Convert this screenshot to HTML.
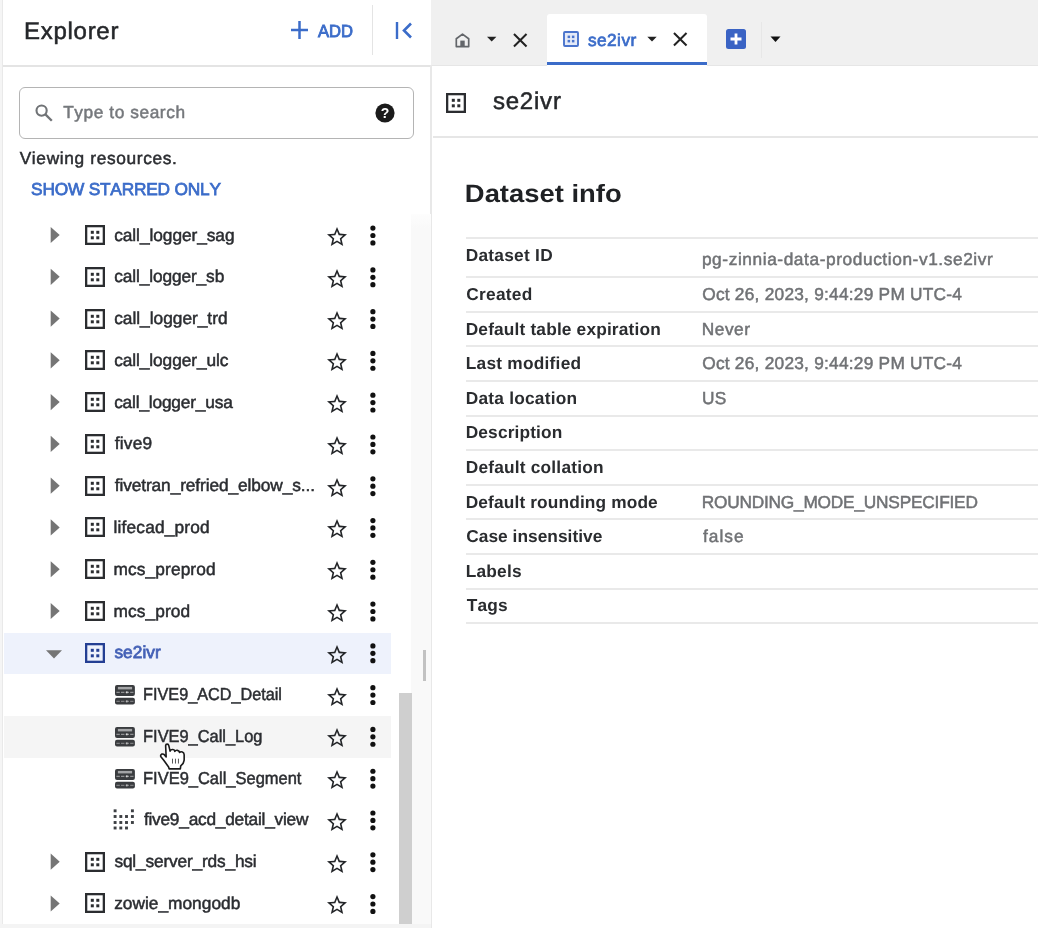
<!DOCTYPE html>
<html><head><meta charset="utf-8"><title>Explorer</title>
<style>
html,body{margin:0;padding:0;}
body{width:1038px;height:928px;position:relative;overflow:hidden;background:#fff;font-family:"Liberation Sans",sans-serif;}
#root{position:absolute;left:-6px;top:-6px;width:1050px;height:940px;overflow:hidden;background:#fff;filter:blur(0.65px);}
#in{position:absolute;left:6px;top:6px;width:1038px;height:928px;}
.t{position:absolute;white-space:nowrap;line-height:1.149;text-rendering:geometricPrecision;font-kerning:none;-webkit-text-stroke:0.5px currentColor;}
.a{position:absolute;}
svg{position:absolute;overflow:visible;}
</style></head><body><div id="root"><div id="in">

<div class="a" style="left:430.5px;top:-6px;width:614px;height:71.3px;background:#f0f0f0"></div>
<div class="a" style="left:430.5px;top:65px;width:614px;height:1.2px;background:#e6e6e6"></div>
<div class="a" style="left:-6px;top:65.1px;width:437px;height:1.5px;background:#e4e4e4"></div>
<div class="a" style="left:-6px;top:-6px;width:8.4px;height:940px;background:#f5f5f5"></div>
<div class="a" style="left:2.2px;top:-6px;width:1.2px;height:940px;background:#e9e9e9"></div>
<div class="a" style="left:430px;top:65px;width:1.8px;height:869px;background:#e8e8e8"></div>
<div class="a" style="left:371.5px;top:5px;width:1.5px;height:50px;background:#e4e4e4"></div>
<span class="t" style="left:24.12px;top:17.68px;font-size:24px;color:#25272a;font-weight:400;letter-spacing:0.704px;">Explorer</span>
<svg style="left:291.2px;top:21.2px" width="17" height="18" viewBox="0 0 17 18"><path d="M8.5 0v18M0 9h17" stroke="#3b6cc9" stroke-width="2.5" fill="none"/></svg>
<span class="t" style="left:318.3px;top:20.67px;font-size:17.6px;color:#3b6cc9;font-weight:400;letter-spacing:0px;-webkit-text-stroke:0.9px currentColor;transform:scaleX(0.9439);transform-origin:-0.0px 0;">ADD</span>
<svg style="left:395.3px;top:21.3px" width="19" height="19" viewBox="0 0 19 19"><path d="M2 1v17" stroke="#3b6cc9" stroke-width="2.4" fill="none"/><path d="M16 2.5L9 9.5l7 7" stroke="#3b6cc9" stroke-width="2.6" fill="none"/></svg>
<div class="a" style="left:19px;top:87px;width:392.5px;height:49.5px;border:1.5px solid #b4b4b4;border-radius:6px;background:#fff"></div>
<svg style="left:35.3px;top:104.2px" width="18" height="18" viewBox="0 0 18 18"><circle cx="6.6" cy="6.6" r="5.1" stroke="#707376" stroke-width="2.1" fill="none"/><path d="M10.4 10.4L16.8 16.8" stroke="#707376" stroke-width="2.3" fill="none"/></svg>
<span class="t" style="left:63.13px;top:103.04px;font-size:17.3px;color:#75787c;font-weight:400;letter-spacing:0.582px;">Type to search</span>
<svg style="left:374.7px;top:102.6px" width="20" height="20" viewBox="0 0 20 20"><circle cx="10" cy="10" r="9.6" fill="#1b1b1b"/><text x="10" y="15" font-family="Liberation Sans" font-weight="700" font-size="14" fill="#fff" text-anchor="middle">?</text></svg>
<span class="t" style="left:19.7px;top:148.54px;font-size:17.3px;color:#2b2d31;font-weight:400;letter-spacing:0.66px;">Viewing resources.</span>
<span class="t" style="left:31.06px;top:179.94px;font-size:17.3px;color:#3b6cc9;font-weight:400;letter-spacing:-0.194px;-webkit-text-stroke:0.75px currentColor;">SHOW STARRED ONLY</span>
<div class="a" style="left:4px;top:632.9px;width:387px;height:41.4px;background:#eef2fc"></div>
<div class="a" style="left:4px;top:716.16px;width:387px;height:41.5px;background:#f5f5f5"></div>
<svg style="left:0;top:0" width="1" height="1"><polygon points="50.7,226.9 59.7,235.0 50.7,243.1" fill="#757575"/></svg>
<svg style="left:85.3px;top:225.0px" width="20" height="20" viewBox="0 0 20 20"><rect x="1.15" y="1.15" width="17.7" height="17.7" fill="none" stroke="#2b2d30" stroke-width="2.3"/><rect x="5.8" y="5.8" width="3" height="3" fill="#2b2d30"/><rect x="11.3" y="5.8" width="3" height="3" fill="#2b2d30"/><rect x="5.8" y="11.3" width="3" height="3" fill="#2b2d30"/><rect x="11.3" y="11.3" width="3" height="3" fill="#2b2d30"/></svg>
<span class="t" style="left:114.16px;top:225.54px;font-size:17.3px;color:#2b2d31;font-weight:400;letter-spacing:-0.048px;">call_logger_sag</span>
<svg style="left:325.1px;top:225.0px" width="24.0" height="24.0" viewBox="0 0 24 24"><path fill="#232528" d="M22 9.24l-7.19-.62L12 2 9.19 8.63 2 9.24l5.46 4.73L5.82 21 12 17.27 18.18 21l-1.63-7.03L22 9.24zM12 15.4l-3.76 2.27 1-4.28-3.32-2.88 4.38-.38L12 6.1l1.71 4.04 4.38.38-3.32 2.88 1 4.28L12 15.4z"/></svg>
<svg style="left:0;top:0" width="1" height="1"><circle cx="372.9" cy="228.1" r="2.6" fill="#111"/><circle cx="372.9" cy="235.5" r="2.6" fill="#111"/><circle cx="372.9" cy="242.9" r="2.6" fill="#111"/></svg>
<svg style="left:0;top:0" width="1" height="1"><polygon points="50.7,268.68 59.7,276.78 50.7,284.88" fill="#757575"/></svg>
<svg style="left:85.3px;top:266.78000000000003px" width="20" height="20" viewBox="0 0 20 20"><rect x="1.15" y="1.15" width="17.7" height="17.7" fill="none" stroke="#2b2d30" stroke-width="2.3"/><rect x="5.8" y="5.8" width="3" height="3" fill="#2b2d30"/><rect x="11.3" y="5.8" width="3" height="3" fill="#2b2d30"/><rect x="5.8" y="11.3" width="3" height="3" fill="#2b2d30"/><rect x="11.3" y="11.3" width="3" height="3" fill="#2b2d30"/></svg>
<span class="t" style="left:114.16px;top:267.32px;font-size:17.3px;color:#2b2d31;font-weight:400;letter-spacing:-0.102px;">call_logger_sb</span>
<svg style="left:325.1px;top:266.78px" width="24.0" height="24.0" viewBox="0 0 24 24"><path fill="#232528" d="M22 9.24l-7.19-.62L12 2 9.19 8.63 2 9.24l5.46 4.73L5.82 21 12 17.27 18.18 21l-1.63-7.03L22 9.24zM12 15.4l-3.76 2.27 1-4.28-3.32-2.88 4.38-.38L12 6.1l1.71 4.04 4.38.38-3.32 2.88 1 4.28L12 15.4z"/></svg>
<svg style="left:0;top:0" width="1" height="1"><circle cx="372.9" cy="269.88" r="2.6" fill="#111"/><circle cx="372.9" cy="277.28" r="2.6" fill="#111"/><circle cx="372.9" cy="284.68" r="2.6" fill="#111"/></svg>
<svg style="left:0;top:0" width="1" height="1"><polygon points="50.7,310.46 59.7,318.56 50.7,326.66" fill="#757575"/></svg>
<svg style="left:85.3px;top:308.56000000000006px" width="20" height="20" viewBox="0 0 20 20"><rect x="1.15" y="1.15" width="17.7" height="17.7" fill="none" stroke="#2b2d30" stroke-width="2.3"/><rect x="5.8" y="5.8" width="3" height="3" fill="#2b2d30"/><rect x="11.3" y="5.8" width="3" height="3" fill="#2b2d30"/><rect x="5.8" y="11.3" width="3" height="3" fill="#2b2d30"/><rect x="11.3" y="11.3" width="3" height="3" fill="#2b2d30"/></svg>
<span class="t" style="left:114.16px;top:309.1px;font-size:17.3px;color:#2b2d31;font-weight:400;letter-spacing:0.002px;">call_logger_trd</span>
<svg style="left:325.1px;top:308.56px" width="24.0" height="24.0" viewBox="0 0 24 24"><path fill="#232528" d="M22 9.24l-7.19-.62L12 2 9.19 8.63 2 9.24l5.46 4.73L5.82 21 12 17.27 18.18 21l-1.63-7.03L22 9.24zM12 15.4l-3.76 2.27 1-4.28-3.32-2.88 4.38-.38L12 6.1l1.71 4.04 4.38.38-3.32 2.88 1 4.28L12 15.4z"/></svg>
<svg style="left:0;top:0" width="1" height="1"><circle cx="372.9" cy="311.66" r="2.6" fill="#111"/><circle cx="372.9" cy="319.06" r="2.6" fill="#111"/><circle cx="372.9" cy="326.46" r="2.6" fill="#111"/></svg>
<svg style="left:0;top:0" width="1" height="1"><polygon points="50.7,352.24 59.7,360.34 50.7,368.44" fill="#757575"/></svg>
<svg style="left:85.3px;top:350.34000000000003px" width="20" height="20" viewBox="0 0 20 20"><rect x="1.15" y="1.15" width="17.7" height="17.7" fill="none" stroke="#2b2d30" stroke-width="2.3"/><rect x="5.8" y="5.8" width="3" height="3" fill="#2b2d30"/><rect x="11.3" y="5.8" width="3" height="3" fill="#2b2d30"/><rect x="5.8" y="11.3" width="3" height="3" fill="#2b2d30"/><rect x="11.3" y="11.3" width="3" height="3" fill="#2b2d30"/></svg>
<span class="t" style="left:114.16px;top:350.88px;font-size:17.3px;color:#2b2d31;font-weight:400;letter-spacing:-0.078px;">call_logger_ulc</span>
<svg style="left:325.1px;top:350.34px" width="24.0" height="24.0" viewBox="0 0 24 24"><path fill="#232528" d="M22 9.24l-7.19-.62L12 2 9.19 8.63 2 9.24l5.46 4.73L5.82 21 12 17.27 18.18 21l-1.63-7.03L22 9.24zM12 15.4l-3.76 2.27 1-4.28-3.32-2.88 4.38-.38L12 6.1l1.71 4.04 4.38.38-3.32 2.88 1 4.28L12 15.4z"/></svg>
<svg style="left:0;top:0" width="1" height="1"><circle cx="372.9" cy="353.44" r="2.6" fill="#111"/><circle cx="372.9" cy="360.84" r="2.6" fill="#111"/><circle cx="372.9" cy="368.24" r="2.6" fill="#111"/></svg>
<svg style="left:0;top:0" width="1" height="1"><polygon points="50.7,394.02 59.7,402.12 50.7,410.22" fill="#757575"/></svg>
<svg style="left:85.3px;top:392.12px" width="20" height="20" viewBox="0 0 20 20"><rect x="1.15" y="1.15" width="17.7" height="17.7" fill="none" stroke="#2b2d30" stroke-width="2.3"/><rect x="5.8" y="5.8" width="3" height="3" fill="#2b2d30"/><rect x="11.3" y="5.8" width="3" height="3" fill="#2b2d30"/><rect x="5.8" y="11.3" width="3" height="3" fill="#2b2d30"/><rect x="11.3" y="11.3" width="3" height="3" fill="#2b2d30"/></svg>
<span class="t" style="left:114.16px;top:392.66px;font-size:17.3px;color:#2b2d31;font-weight:400;letter-spacing:-0.175px;">call_logger_usa</span>
<svg style="left:325.1px;top:392.12px" width="24.0" height="24.0" viewBox="0 0 24 24"><path fill="#232528" d="M22 9.24l-7.19-.62L12 2 9.19 8.63 2 9.24l5.46 4.73L5.82 21 12 17.27 18.18 21l-1.63-7.03L22 9.24zM12 15.4l-3.76 2.27 1-4.28-3.32-2.88 4.38-.38L12 6.1l1.71 4.04 4.38.38-3.32 2.88 1 4.28L12 15.4z"/></svg>
<svg style="left:0;top:0" width="1" height="1"><circle cx="372.9" cy="395.22" r="2.6" fill="#111"/><circle cx="372.9" cy="402.62" r="2.6" fill="#111"/><circle cx="372.9" cy="410.02" r="2.6" fill="#111"/></svg>
<svg style="left:0;top:0" width="1" height="1"><polygon points="50.7,435.8 59.7,443.9 50.7,452.0" fill="#757575"/></svg>
<svg style="left:85.3px;top:433.90000000000003px" width="20" height="20" viewBox="0 0 20 20"><rect x="1.15" y="1.15" width="17.7" height="17.7" fill="none" stroke="#2b2d30" stroke-width="2.3"/><rect x="5.8" y="5.8" width="3" height="3" fill="#2b2d30"/><rect x="11.3" y="5.8" width="3" height="3" fill="#2b2d30"/><rect x="5.8" y="11.3" width="3" height="3" fill="#2b2d30"/><rect x="11.3" y="11.3" width="3" height="3" fill="#2b2d30"/></svg>
<span class="t" style="left:114.7px;top:434.44px;font-size:17.3px;color:#2b2d31;font-weight:400;letter-spacing:0.24px;">five9</span>
<svg style="left:325.1px;top:433.9px" width="24.0" height="24.0" viewBox="0 0 24 24"><path fill="#232528" d="M22 9.24l-7.19-.62L12 2 9.19 8.63 2 9.24l5.46 4.73L5.82 21 12 17.27 18.18 21l-1.63-7.03L22 9.24zM12 15.4l-3.76 2.27 1-4.28-3.32-2.88 4.38-.38L12 6.1l1.71 4.04 4.38.38-3.32 2.88 1 4.28L12 15.4z"/></svg>
<svg style="left:0;top:0" width="1" height="1"><circle cx="372.9" cy="437.0" r="2.6" fill="#111"/><circle cx="372.9" cy="444.4" r="2.6" fill="#111"/><circle cx="372.9" cy="451.8" r="2.6" fill="#111"/></svg>
<svg style="left:0;top:0" width="1" height="1"><polygon points="50.7,477.58 59.7,485.68 50.7,493.78" fill="#757575"/></svg>
<svg style="left:85.3px;top:475.68000000000006px" width="20" height="20" viewBox="0 0 20 20"><rect x="1.15" y="1.15" width="17.7" height="17.7" fill="none" stroke="#2b2d30" stroke-width="2.3"/><rect x="5.8" y="5.8" width="3" height="3" fill="#2b2d30"/><rect x="11.3" y="5.8" width="3" height="3" fill="#2b2d30"/><rect x="5.8" y="11.3" width="3" height="3" fill="#2b2d30"/><rect x="11.3" y="11.3" width="3" height="3" fill="#2b2d30"/></svg>
<span class="t" style="left:114.7px;top:476.22px;font-size:17.3px;color:#2b2d31;font-weight:400;letter-spacing:-0.09px;">fivetran_refried_elbow_s...</span>
<svg style="left:325.1px;top:475.68px" width="24.0" height="24.0" viewBox="0 0 24 24"><path fill="#232528" d="M22 9.24l-7.19-.62L12 2 9.19 8.63 2 9.24l5.46 4.73L5.82 21 12 17.27 18.18 21l-1.63-7.03L22 9.24zM12 15.4l-3.76 2.27 1-4.28-3.32-2.88 4.38-.38L12 6.1l1.71 4.04 4.38.38-3.32 2.88 1 4.28L12 15.4z"/></svg>
<svg style="left:0;top:0" width="1" height="1"><circle cx="372.9" cy="478.78" r="2.6" fill="#111"/><circle cx="372.9" cy="486.18" r="2.6" fill="#111"/><circle cx="372.9" cy="493.58" r="2.6" fill="#111"/></svg>
<svg style="left:0;top:0" width="1" height="1"><polygon points="50.7,519.36 59.7,527.46 50.7,535.56" fill="#757575"/></svg>
<svg style="left:85.3px;top:517.46px" width="20" height="20" viewBox="0 0 20 20"><rect x="1.15" y="1.15" width="17.7" height="17.7" fill="none" stroke="#2b2d30" stroke-width="2.3"/><rect x="5.8" y="5.8" width="3" height="3" fill="#2b2d30"/><rect x="11.3" y="5.8" width="3" height="3" fill="#2b2d30"/><rect x="5.8" y="11.3" width="3" height="3" fill="#2b2d30"/><rect x="11.3" y="11.3" width="3" height="3" fill="#2b2d30"/></svg>
<span class="t" style="left:113.62px;top:518.0px;font-size:17.3px;color:#2b2d31;font-weight:400;letter-spacing:0.163px;">lifecad_prod</span>
<svg style="left:325.1px;top:517.46px" width="24.0" height="24.0" viewBox="0 0 24 24"><path fill="#232528" d="M22 9.24l-7.19-.62L12 2 9.19 8.63 2 9.24l5.46 4.73L5.82 21 12 17.27 18.18 21l-1.63-7.03L22 9.24zM12 15.4l-3.76 2.27 1-4.28-3.32-2.88 4.38-.38L12 6.1l1.71 4.04 4.38.38-3.32 2.88 1 4.28L12 15.4z"/></svg>
<svg style="left:0;top:0" width="1" height="1"><circle cx="372.9" cy="520.56" r="2.6" fill="#111"/><circle cx="372.9" cy="527.96" r="2.6" fill="#111"/><circle cx="372.9" cy="535.36" r="2.6" fill="#111"/></svg>
<svg style="left:0;top:0" width="1" height="1"><polygon points="50.7,561.14 59.7,569.24 50.7,577.34" fill="#757575"/></svg>
<svg style="left:85.3px;top:559.24px" width="20" height="20" viewBox="0 0 20 20"><rect x="1.15" y="1.15" width="17.7" height="17.7" fill="none" stroke="#2b2d30" stroke-width="2.3"/><rect x="5.8" y="5.8" width="3" height="3" fill="#2b2d30"/><rect x="11.3" y="5.8" width="3" height="3" fill="#2b2d30"/><rect x="5.8" y="11.3" width="3" height="3" fill="#2b2d30"/><rect x="11.3" y="11.3" width="3" height="3" fill="#2b2d30"/></svg>
<span class="t" style="left:113.62px;top:559.78px;font-size:17.3px;color:#2b2d31;font-weight:400;letter-spacing:0.109px;">mcs_preprod</span>
<svg style="left:325.1px;top:559.24px" width="24.0" height="24.0" viewBox="0 0 24 24"><path fill="#232528" d="M22 9.24l-7.19-.62L12 2 9.19 8.63 2 9.24l5.46 4.73L5.82 21 12 17.27 18.18 21l-1.63-7.03L22 9.24zM12 15.4l-3.76 2.27 1-4.28-3.32-2.88 4.38-.38L12 6.1l1.71 4.04 4.38.38-3.32 2.88 1 4.28L12 15.4z"/></svg>
<svg style="left:0;top:0" width="1" height="1"><circle cx="372.9" cy="562.34" r="2.6" fill="#111"/><circle cx="372.9" cy="569.74" r="2.6" fill="#111"/><circle cx="372.9" cy="577.14" r="2.6" fill="#111"/></svg>
<svg style="left:0;top:0" width="1" height="1"><polygon points="50.7,602.92 59.7,611.02 50.7,619.12" fill="#757575"/></svg>
<svg style="left:85.3px;top:601.02px" width="20" height="20" viewBox="0 0 20 20"><rect x="1.15" y="1.15" width="17.7" height="17.7" fill="none" stroke="#2b2d30" stroke-width="2.3"/><rect x="5.8" y="5.8" width="3" height="3" fill="#2b2d30"/><rect x="11.3" y="5.8" width="3" height="3" fill="#2b2d30"/><rect x="5.8" y="11.3" width="3" height="3" fill="#2b2d30"/><rect x="11.3" y="11.3" width="3" height="3" fill="#2b2d30"/></svg>
<span class="t" style="left:113.62px;top:601.56px;font-size:17.3px;color:#2b2d31;font-weight:400;letter-spacing:0.085px;">mcs_prod</span>
<svg style="left:325.1px;top:601.02px" width="24.0" height="24.0" viewBox="0 0 24 24"><path fill="#232528" d="M22 9.24l-7.19-.62L12 2 9.19 8.63 2 9.24l5.46 4.73L5.82 21 12 17.27 18.18 21l-1.63-7.03L22 9.24zM12 15.4l-3.76 2.27 1-4.28-3.32-2.88 4.38-.38L12 6.1l1.71 4.04 4.38.38-3.32 2.88 1 4.28L12 15.4z"/></svg>
<svg style="left:0;top:0" width="1" height="1"><circle cx="372.9" cy="604.12" r="2.6" fill="#111"/><circle cx="372.9" cy="611.52" r="2.6" fill="#111"/><circle cx="372.9" cy="618.92" r="2.6" fill="#111"/></svg>
<svg style="left:0;top:0" width="1" height="1"><polygon points="46,650.3 62,650.3 54,658.6" fill="#757575"/></svg>
<svg style="left:85.3px;top:642.8000000000001px" width="20" height="20" viewBox="0 0 20 20"><rect x="1.15" y="1.15" width="17.7" height="17.7" fill="none" stroke="#243f93" stroke-width="2.3"/><rect x="5.8" y="5.8" width="3" height="3" fill="#243f93"/><rect x="11.3" y="5.8" width="3" height="3" fill="#243f93"/><rect x="5.8" y="11.3" width="3" height="3" fill="#243f93"/><rect x="11.3" y="11.3" width="3" height="3" fill="#243f93"/></svg>
<span class="t" style="left:114.43px;top:643.34px;font-size:17.3px;color:#4461b6;font-weight:400;letter-spacing:0.041px;-webkit-text-stroke:0.75px currentColor;">se2ivr</span>
<svg style="left:325.1px;top:642.8px" width="24.0" height="24.0" viewBox="0 0 24 24"><path fill="#232528" d="M22 9.24l-7.19-.62L12 2 9.19 8.63 2 9.24l5.46 4.73L5.82 21 12 17.27 18.18 21l-1.63-7.03L22 9.24zM12 15.4l-3.76 2.27 1-4.28-3.32-2.88 4.38-.38L12 6.1l1.71 4.04 4.38.38-3.32 2.88 1 4.28L12 15.4z"/></svg>
<svg style="left:0;top:0" width="1" height="1"><circle cx="372.9" cy="645.9" r="2.6" fill="#111"/><circle cx="372.9" cy="653.3" r="2.6" fill="#111"/><circle cx="372.9" cy="660.7" r="2.6" fill="#111"/></svg>
<svg style="left:114.65px;top:685.03px" width="19.9" height="19.3" viewBox="0 0 19.9 19.3"><rect x="0" y="0" width="19.9" height="10.9" rx="2" fill="#3a3c3f"/><rect x="2.9" y="1.9" width="14.2" height="2.5" fill="#a4a5a7"/><path d="M1.4 7.3h17.1" stroke="#909193" stroke-width="1.3" stroke-dasharray="3.4 1.2"/><rect x="11.2" y="6.4" width="1.3" height="1.9" fill="#e8e8e8"/><rect x="0" y="12.8" width="19.9" height="6.6" rx="2" fill="#3a3c3f"/><path d="M1.4 16.4h17.1" stroke="#7d7e80" stroke-width="1.3" stroke-dasharray="3.4 1.2"/><rect x="11.2" y="15.4" width="1.3" height="2" fill="#c8c8c8"/></svg>
<span class="t" style="left:142.95px;top:685.12px;font-size:17.3px;color:#2b2d31;font-weight:400;letter-spacing:0px;transform:scaleX(0.9390);transform-origin:1.35px 0;">FIVE9_ACD_Detail</span>
<svg style="left:325.1px;top:684.58px" width="24.0" height="24.0" viewBox="0 0 24 24"><path fill="#232528" d="M22 9.24l-7.19-.62L12 2 9.19 8.63 2 9.24l5.46 4.73L5.82 21 12 17.27 18.18 21l-1.63-7.03L22 9.24zM12 15.4l-3.76 2.27 1-4.28-3.32-2.88 4.38-.38L12 6.1l1.71 4.04 4.38.38-3.32 2.88 1 4.28L12 15.4z"/></svg>
<svg style="left:0;top:0" width="1" height="1"><circle cx="372.9" cy="687.68" r="2.6" fill="#111"/><circle cx="372.9" cy="695.08" r="2.6" fill="#111"/><circle cx="372.9" cy="702.48" r="2.6" fill="#111"/></svg>
<svg style="left:114.65px;top:726.81px" width="19.9" height="19.3" viewBox="0 0 19.9 19.3"><rect x="0" y="0" width="19.9" height="10.9" rx="2" fill="#3a3c3f"/><rect x="2.9" y="1.9" width="14.2" height="2.5" fill="#a4a5a7"/><path d="M1.4 7.3h17.1" stroke="#909193" stroke-width="1.3" stroke-dasharray="3.4 1.2"/><rect x="11.2" y="6.4" width="1.3" height="1.9" fill="#e8e8e8"/><rect x="0" y="12.8" width="19.9" height="6.6" rx="2" fill="#3a3c3f"/><path d="M1.4 16.4h17.1" stroke="#7d7e80" stroke-width="1.3" stroke-dasharray="3.4 1.2"/><rect x="11.2" y="15.4" width="1.3" height="2" fill="#c8c8c8"/></svg>
<span class="t" style="left:142.95px;top:726.9px;font-size:17.3px;color:#2b2d31;font-weight:400;letter-spacing:0px;transform:scaleX(0.9478);transform-origin:1.35px 0;">FIVE9_Call_Log</span>
<svg style="left:325.1px;top:726.36px" width="24.0" height="24.0" viewBox="0 0 24 24"><path fill="#232528" d="M22 9.24l-7.19-.62L12 2 9.19 8.63 2 9.24l5.46 4.73L5.82 21 12 17.27 18.18 21l-1.63-7.03L22 9.24zM12 15.4l-3.76 2.27 1-4.28-3.32-2.88 4.38-.38L12 6.1l1.71 4.04 4.38.38-3.32 2.88 1 4.28L12 15.4z"/></svg>
<svg style="left:0;top:0" width="1" height="1"><circle cx="372.9" cy="729.46" r="2.6" fill="#111"/><circle cx="372.9" cy="736.86" r="2.6" fill="#111"/><circle cx="372.9" cy="744.26" r="2.6" fill="#111"/></svg>
<svg style="left:114.65px;top:768.59px" width="19.9" height="19.3" viewBox="0 0 19.9 19.3"><rect x="0" y="0" width="19.9" height="10.9" rx="2" fill="#3a3c3f"/><rect x="2.9" y="1.9" width="14.2" height="2.5" fill="#a4a5a7"/><path d="M1.4 7.3h17.1" stroke="#909193" stroke-width="1.3" stroke-dasharray="3.4 1.2"/><rect x="11.2" y="6.4" width="1.3" height="1.9" fill="#e8e8e8"/><rect x="0" y="12.8" width="19.9" height="6.6" rx="2" fill="#3a3c3f"/><path d="M1.4 16.4h17.1" stroke="#7d7e80" stroke-width="1.3" stroke-dasharray="3.4 1.2"/><rect x="11.2" y="15.4" width="1.3" height="2" fill="#c8c8c8"/></svg>
<span class="t" style="left:142.95px;top:768.68px;font-size:17.3px;color:#2b2d31;font-weight:400;letter-spacing:0px;transform:scaleX(0.9529);transform-origin:1.35px 0;">FIVE9_Call_Segment</span>
<svg style="left:325.1px;top:768.14px" width="24.0" height="24.0" viewBox="0 0 24 24"><path fill="#232528" d="M22 9.24l-7.19-.62L12 2 9.19 8.63 2 9.24l5.46 4.73L5.82 21 12 17.27 18.18 21l-1.63-7.03L22 9.24zM12 15.4l-3.76 2.27 1-4.28-3.32-2.88 4.38-.38L12 6.1l1.71 4.04 4.38.38-3.32 2.88 1 4.28L12 15.4z"/></svg>
<svg style="left:0;top:0" width="1" height="1"><circle cx="372.9" cy="771.24" r="2.6" fill="#111"/><circle cx="372.9" cy="778.64" r="2.6" fill="#111"/><circle cx="372.9" cy="786.04" r="2.6" fill="#111"/></svg>
<svg style="left:113.4px;top:809.22px" width="21" height="21" viewBox="0 0 21 21"><rect x="0.65" y="0.35" width="2.9" height="2.9" fill="#3c3f43"/><rect x="17.95" y="0.35" width="2.9" height="2.9" fill="#3c3f43"/><rect x="0.65" y="6.05" width="2.9" height="2.9" fill="#3c3f43"/><rect x="6.35" y="6.05" width="2.9" height="2.9" fill="#3c3f43"/><rect x="12.05" y="6.05" width="2.9" height="2.9" fill="#3c3f43"/><rect x="17.95" y="6.05" width="2.9" height="2.9" fill="#3c3f43"/><rect x="0.65" y="12.05" width="2.9" height="2.9" fill="#3c3f43"/><rect x="6.35" y="12.05" width="2.9" height="2.9" fill="#3c3f43"/><rect x="12.05" y="12.05" width="2.9" height="2.9" fill="#3c3f43"/><rect x="17.95" y="12.05" width="2.9" height="2.9" fill="#3c3f43"/><rect x="0.65" y="17.55" width="2.9" height="2.9" fill="#3c3f43"/><rect x="6.35" y="17.55" width="2.9" height="2.9" fill="#3c3f43"/><rect x="12.05" y="17.55" width="2.9" height="2.9" fill="#3c3f43"/></svg>
<span class="t" style="left:143.9px;top:810.46px;font-size:17.3px;color:#2b2d31;font-weight:400;letter-spacing:-0.229px;">five9_acd_detail_view</span>
<svg style="left:325.1px;top:809.92px" width="24.0" height="24.0" viewBox="0 0 24 24"><path fill="#232528" d="M22 9.24l-7.19-.62L12 2 9.19 8.63 2 9.24l5.46 4.73L5.82 21 12 17.27 18.18 21l-1.63-7.03L22 9.24zM12 15.4l-3.76 2.27 1-4.28-3.32-2.88 4.38-.38L12 6.1l1.71 4.04 4.38.38-3.32 2.88 1 4.28L12 15.4z"/></svg>
<svg style="left:0;top:0" width="1" height="1"><circle cx="372.9" cy="813.02" r="2.6" fill="#111"/><circle cx="372.9" cy="820.42" r="2.6" fill="#111"/><circle cx="372.9" cy="827.82" r="2.6" fill="#111"/></svg>
<svg style="left:0;top:0" width="1" height="1"><polygon points="50.7,853.6 59.7,861.7 50.7,869.8" fill="#757575"/></svg>
<svg style="left:85.3px;top:851.7px" width="20" height="20" viewBox="0 0 20 20"><rect x="1.15" y="1.15" width="17.7" height="17.7" fill="none" stroke="#2b2d30" stroke-width="2.3"/><rect x="5.8" y="5.8" width="3" height="3" fill="#2b2d30"/><rect x="11.3" y="5.8" width="3" height="3" fill="#2b2d30"/><rect x="5.8" y="11.3" width="3" height="3" fill="#2b2d30"/><rect x="11.3" y="11.3" width="3" height="3" fill="#2b2d30"/></svg>
<span class="t" style="left:114.43px;top:852.24px;font-size:17.3px;color:#2b2d31;font-weight:400;letter-spacing:-0.164px;">sql_server_rds_hsi</span>
<svg style="left:325.1px;top:851.7px" width="24.0" height="24.0" viewBox="0 0 24 24"><path fill="#232528" d="M22 9.24l-7.19-.62L12 2 9.19 8.63 2 9.24l5.46 4.73L5.82 21 12 17.27 18.18 21l-1.63-7.03L22 9.24zM12 15.4l-3.76 2.27 1-4.28-3.32-2.88 4.38-.38L12 6.1l1.71 4.04 4.38.38-3.32 2.88 1 4.28L12 15.4z"/></svg>
<svg style="left:0;top:0" width="1" height="1"><circle cx="372.9" cy="854.8" r="2.6" fill="#111"/><circle cx="372.9" cy="862.2" r="2.6" fill="#111"/><circle cx="372.9" cy="869.6" r="2.6" fill="#111"/></svg>
<svg style="left:0;top:0" width="1" height="1"><polygon points="50.7,895.38 59.7,903.48 50.7,911.58" fill="#757575"/></svg>
<svg style="left:85.3px;top:893.48px" width="20" height="20" viewBox="0 0 20 20"><rect x="1.15" y="1.15" width="17.7" height="17.7" fill="none" stroke="#2b2d30" stroke-width="2.3"/><rect x="5.8" y="5.8" width="3" height="3" fill="#2b2d30"/><rect x="11.3" y="5.8" width="3" height="3" fill="#2b2d30"/><rect x="5.8" y="11.3" width="3" height="3" fill="#2b2d30"/><rect x="11.3" y="11.3" width="3" height="3" fill="#2b2d30"/></svg>
<span class="t" style="left:114.16px;top:894.02px;font-size:17.3px;color:#2b2d31;font-weight:400;letter-spacing:0.021px;">zowie_mongodb</span>
<svg style="left:325.1px;top:893.48px" width="24.0" height="24.0" viewBox="0 0 24 24"><path fill="#232528" d="M22 9.24l-7.19-.62L12 2 9.19 8.63 2 9.24l5.46 4.73L5.82 21 12 17.27 18.18 21l-1.63-7.03L22 9.24zM12 15.4l-3.76 2.27 1-4.28-3.32-2.88 4.38-.38L12 6.1l1.71 4.04 4.38.38-3.32 2.88 1 4.28L12 15.4z"/></svg>
<svg style="left:0;top:0" width="1" height="1"><circle cx="372.9" cy="896.58" r="2.6" fill="#111"/><circle cx="372.9" cy="903.98" r="2.6" fill="#111"/><circle cx="372.9" cy="911.38" r="2.6" fill="#111"/></svg>
<div class="a" style="left:410.5px;top:214px;width:20px;height:710px;background:linear-gradient(#fdfdfd,#f9f9f9 14px)"></div>
<div class="a" style="left:399px;top:693px;width:13px;height:230.5px;background:#cfcfcf"></div>
<div class="a" style="left:422.5px;top:650px;width:3px;height:31px;background:#c2c2c2"></div>
<div class="a" style="left:-6px;top:924.3px;width:437px;height:10px;background:#f4f4f4"></div>
<svg style="left:140px;top:725px" width="70" height="60" viewBox="0 0 1038 890"><path d="M380 305 Q382 283 402 283 Q424 283 427 305 L446 388 Q452 362 488 364 Q514 366 516 392 Q524 372 556 376 Q584 380 586 408 Q600 392 628 400 Q654 410 655 440 L655 520 Q650 570 604 606 L598 650 L432 650 L424 622 L352 522 L310 470 Q298 448 322 432 Q344 424 360 440 L388 474 Z" fill="#fff" stroke="#1a1a1a" stroke-width="24" stroke-linejoin="round"/><path d="M482 500V572M526 500V572M570 500V572" stroke="#1a1a1a" stroke-width="11"/></svg>
<svg style="left:454.5px;top:32.6px" width="15" height="14.5" viewBox="0 0 15 14.5"><path d="M1.3 13.6V5.8L7.5 1.1l6.2 4.7v7.8z" fill="none" stroke="#63666a" stroke-width="1.7" stroke-linejoin="round"/><rect x="5.3" y="7.6" width="4.4" height="6.4" fill="#63666a"/></svg>
<svg style="left:0;top:0" width="1" height="1"><polygon points="487,36.8 496.4,36.8 491.7,41.6" fill="#222"/></svg>
<svg style="left:513px;top:32.5px" width="14.5" height="14.5" viewBox="0 0 15 15"><path d="M1 1l13 13M14 1L1 14" stroke="#222" stroke-width="2.1"/></svg>
<div class="a" style="left:547px;top:13.5px;width:159.5px;height:52px;background:#fff;border-radius:3px 3px 0 0"></div>
<div class="a" style="left:547px;top:61.8px;width:159.5px;height:3.6px;background:#3b6cc9"></div>
<svg style="left:563px;top:31.2px" width="16" height="16" viewBox="0 0 16 16"><rect x="1" y="1" width="14" height="14" rx="1" fill="#e4eaf8" stroke="#4a74cc" stroke-width="1.9"/><rect x="4.6" y="4.6" width="2.5" height="2.5" fill="#4a74cc"/><rect x="8.9" y="4.6" width="2.5" height="2.5" fill="#4a74cc"/><rect x="4.6" y="8.9" width="2.5" height="2.5" fill="#4a74cc"/><rect x="8.9" y="8.9" width="2.5" height="2.5" fill="#4a74cc"/></svg>
<span class="t" style="left:587.93px;top:30.64px;font-size:17.3px;color:#3b6cc9;font-weight:400;letter-spacing:0.441px;-webkit-text-stroke:0.7px currentColor;">se2ivr</span>
<svg style="left:0;top:0" width="1" height="1"><polygon points="647.3,36.8 656.7,36.8 652,41.6" fill="#222"/></svg>
<svg style="left:673.3px;top:32.3px" width="14.5" height="14.5" viewBox="0 0 15 15"><path d="M1 1l13 13M14 1L1 14" stroke="#222" stroke-width="2.1"/></svg>
<div class="a" style="left:726px;top:28.8px;width:20.3px;height:20.6px;background:#3a63c4;border-radius:2.5px"></div>
<svg style="left:726.1px;top:29.1px" width="20" height="20" viewBox="0 0 20 20"><path d="M10 4.5v11M4.5 10h11" stroke="#fff" stroke-width="2.8"/></svg>
<div class="a" style="left:760.6px;top:22px;width:1.4px;height:36px;background:#e7e7e7"></div>
<svg style="left:0;top:0" width="1" height="1"><polygon points="770.5,36.5 780.5,36.5 775.5,42" fill="#111"/></svg>
<svg style="left:446.2px;top:92.5px" width="20" height="20" viewBox="0 0 20 20"><rect x="1.15" y="1.15" width="17.7" height="17.7" fill="none" stroke="#2b2d30" stroke-width="2.3"/><rect x="5.8" y="5.8" width="3" height="3" fill="#2b2d30"/><rect x="11.3" y="5.8" width="3" height="3" fill="#2b2d30"/><rect x="5.8" y="11.3" width="3" height="3" fill="#2b2d30"/><rect x="11.3" y="11.3" width="3" height="3" fill="#2b2d30"/></svg>
<span class="t" style="left:492.92px;top:88.28px;font-size:24px;color:#25272a;font-weight:400;letter-spacing:0.795px;">se2ivr</span>
<div class="a" style="left:433px;top:136.3px;width:611px;height:1.4px;background:#e6e6e6"></div>
<span class="t" style="left:465.44px;top:179.97px;font-size:25px;color:#1f2124;font-weight:700;letter-spacing:0px;-webkit-text-stroke:0;transform:scaleX(1.0959);transform-origin:1.56px 0;">Dataset info</span>
<div class="a" style="left:466px;top:236.7px;width:578px;height:2px;background:#e9e9e9"></div>
<span class="t" style="left:465.72px;top:245.54px;font-size:17.3px;color:#2a2c2f;font-weight:700;letter-spacing:0.264px;-webkit-text-stroke:0;">Dataset ID</span>
<span class="t" style="left:701.92px;top:250.14px;font-size:17.3px;color:#707275;font-weight:400;letter-spacing:0.588px;">pg-zinnia-data-production-v1.se2ivr</span>
<div class="a" style="left:466px;top:276.2px;width:578px;height:2px;background:#e9e9e9"></div>
<span class="t" style="left:466.26px;top:285.04px;font-size:17.3px;color:#2a2c2f;font-weight:700;letter-spacing:0.288px;-webkit-text-stroke:0;">Created</span>
<span class="t" style="left:702.19px;top:285.24px;font-size:17.3px;color:#707275;font-weight:400;letter-spacing:0.246px;">Oct 26, 2023, 9:44:29 PM UTC-4</span>
<div class="a" style="left:466px;top:310.8px;width:578px;height:2px;background:#e9e9e9"></div>
<span class="t" style="left:465.72px;top:319.64px;font-size:17.3px;color:#2a2c2f;font-weight:700;letter-spacing:0.17px;-webkit-text-stroke:0;">Default table expiration</span>
<span class="t" style="left:701.65px;top:319.84px;font-size:17.3px;color:#707275;font-weight:400;letter-spacing:0.572px;">Never</span>
<div class="a" style="left:466px;top:345.4px;width:578px;height:2px;background:#e9e9e9"></div>
<span class="t" style="left:465.72px;top:354.24px;font-size:17.3px;color:#2a2c2f;font-weight:700;letter-spacing:0.252px;-webkit-text-stroke:0;">Last modified</span>
<span class="t" style="left:702.19px;top:354.44px;font-size:17.3px;color:#707275;font-weight:400;letter-spacing:0.246px;">Oct 26, 2023, 9:44:29 PM UTC-4</span>
<div class="a" style="left:466px;top:380.0px;width:578px;height:2px;background:#e9e9e9"></div>
<span class="t" style="left:465.72px;top:388.84px;font-size:17.3px;color:#2a2c2f;font-weight:700;letter-spacing:0.233px;-webkit-text-stroke:0;">Data location</span>
<span class="t" style="left:701.92px;top:389.04px;font-size:17.3px;color:#707275;font-weight:400;letter-spacing:0.275px;">US</span>
<div class="a" style="left:466px;top:414.6px;width:578px;height:2px;background:#e9e9e9"></div>
<span class="t" style="left:465.72px;top:423.44px;font-size:17.3px;color:#2a2c2f;font-weight:700;letter-spacing:0.155px;-webkit-text-stroke:0;">Description</span>
<div class="a" style="left:466px;top:449.2px;width:578px;height:2px;background:#e9e9e9"></div>
<span class="t" style="left:465.72px;top:458.04px;font-size:17.3px;color:#2a2c2f;font-weight:700;letter-spacing:0.21px;-webkit-text-stroke:0;">Default collation</span>
<div class="a" style="left:466px;top:483.8px;width:578px;height:2px;background:#e9e9e9"></div>
<span class="t" style="left:465.72px;top:492.64px;font-size:17.3px;color:#2a2c2f;font-weight:700;letter-spacing:0.144px;-webkit-text-stroke:0;">Default rounding mode</span>
<span class="t" style="left:701.65px;top:492.84px;font-size:17.3px;color:#707275;font-weight:400;letter-spacing:-0.212px;">ROUNDING_MODE_UNSPECIFIED</span>
<div class="a" style="left:466px;top:518.4px;width:578px;height:2px;background:#e9e9e9"></div>
<span class="t" style="left:466.26px;top:527.24px;font-size:17.3px;color:#2a2c2f;font-weight:700;letter-spacing:0.046px;-webkit-text-stroke:0;">Case insensitive</span>
<span class="t" style="left:703.0px;top:527.44px;font-size:17.3px;color:#707275;font-weight:400;letter-spacing:1.04px;">false</span>
<div class="a" style="left:466px;top:553.0px;width:578px;height:2px;background:#e9e9e9"></div>
<span class="t" style="left:465.72px;top:561.84px;font-size:17.3px;color:#2a2c2f;font-weight:700;letter-spacing:0.215px;-webkit-text-stroke:0;">Labels</span>
<div class="a" style="left:466px;top:587.6px;width:578px;height:2px;background:#e9e9e9"></div>
<span class="t" style="left:466.8px;top:596.44px;font-size:17.3px;color:#2a2c2f;font-weight:700;letter-spacing:0.169px;-webkit-text-stroke:0;">Tags</span>
<div class="a" style="left:466px;top:622.2px;width:578px;height:2px;background:#e9e9e9"></div>
</div></div></body></html>
